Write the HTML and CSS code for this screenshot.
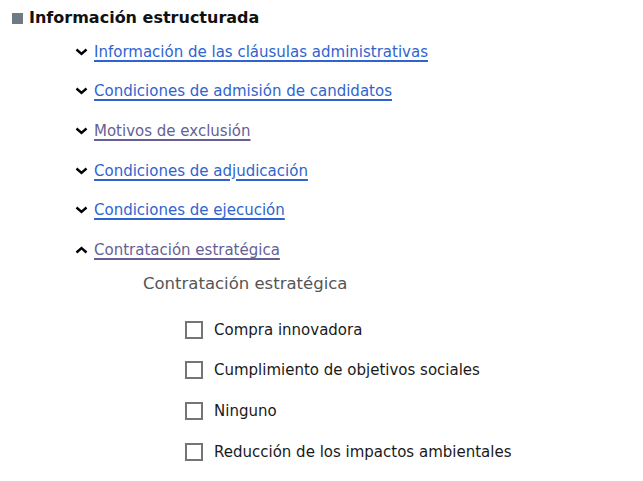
FILE: index.html
```html
<!DOCTYPE html>
<html lang="es">
<head>
  <meta charset="UTF-8">
  <title>Información estructurada</title>
  <link rel="stylesheet" href="styles.css">
</head>
<body>

<h2 class="section-title"><span class="bullet"></span>Información estructurada</h2>

<ul class="sections">
  <li>
    <span class="chevron"><svg width="13" height="8" viewBox="0 0 13 8"><path d="M1.5 1.5 L6.5 6 L11.5 1.5" fill="none" stroke="#000" stroke-width="2.4"/></svg></span>
    <a href="#">Información de las cláusulas administrativas</a>
  </li>
  <li>
    <span class="chevron"><svg width="13" height="8" viewBox="0 0 13 8"><path d="M1.5 1.5 L6.5 6 L11.5 1.5" fill="none" stroke="#000" stroke-width="2.4"/></svg></span>
    <a href="#">Condiciones de admisión de candidatos</a>
  </li>
  <li>
    <span class="chevron"><svg width="13" height="8" viewBox="0 0 13 8"><path d="M1.5 1.5 L6.5 6 L11.5 1.5" fill="none" stroke="#000" stroke-width="2.4"/></svg></span>
    <a href="#" class="visited">Motivos de exclusión</a>
  </li>
  <li>
    <span class="chevron"><svg width="13" height="8" viewBox="0 0 13 8"><path d="M1.5 1.5 L6.5 6 L11.5 1.5" fill="none" stroke="#000" stroke-width="2.4"/></svg></span>
    <a href="#">Condiciones de adjudicación</a>
  </li>
  <li>
    <span class="chevron"><svg width="13" height="8" viewBox="0 0 13 8"><path d="M1.5 1.5 L6.5 6 L11.5 1.5" fill="none" stroke="#000" stroke-width="2.4"/></svg></span>
    <a href="#">Condiciones de ejecución</a>
  </li>
  <li class="open">
    <span class="chevron"><svg width="13" height="8" viewBox="0 0 13 8"><path d="M1.5 6.5 L6.5 2 L11.5 6.5" fill="none" stroke="#000" stroke-width="2.4"/></svg></span>
    <a href="#" class="visited">Contratación estratégica</a>
  </li>
</ul>

<div class="panel">
  <h3 class="panel-title">Contratación estratégica</h3>
  <ul class="options">
    <li><span class="box"></span>Compra innovadora</li>
    <li><span class="box"></span>Cumplimiento de objetivos sociales</li>
    <li><span class="box"></span>Ninguno</li>
    <li><span class="box"></span>Reducción de los impactos ambientales</li>
  </ul>
</div>

</body>
</html>
```

FILE: styles.css
```css
body {
  margin: 8px 12px;
  font-family: "DejaVu Sans", Verdana, sans-serif;
  background: #fff;
  color: #000;
}
.section-title {
  display: flex;
  align-items: center;
  gap: 6px;
  margin: 0;
  font-size: 16px;
  line-height: 20px;
  font-weight: bold;
  color: #111;
}
.bullet {
  width: 11px;
  height: 11px;
  background: #6e7b85;
}
.sections {
  list-style: none;
  margin: 4px 0 0;
  padding: 0 0 0 63px;
}
.sections li {
  display: flex;
  align-items: center;
  gap: 6px;
  height: 39.6px;
  font-size: 15px;
}
.chevron svg {
  display: block;
}
.sections a {
  color: #2f64d0;
  text-decoration: underline;
  text-decoration-thickness: 2px;
  text-underline-offset: 3px;
}
.sections a.visited {
  color: #665f95;
}
.panel {
  padding-left: 131px;
}
.panel-title {
  margin: 2px 0 0;
  font-size: 16.5px;
  font-weight: normal;
  color: #555;
  line-height: 24px;
}
.options {
  list-style: none;
  margin: 14px 0 0;
  padding: 0 0 0 42px;
}
.options li {
  display: flex;
  align-items: center;
  gap: 11px;
  height: 40.6px;
  font-size: 15px;
  color: #1a1a1a;
}
.box {
  width: 14px;
  height: 14px;
  border: 2px solid #757575;
}
```
